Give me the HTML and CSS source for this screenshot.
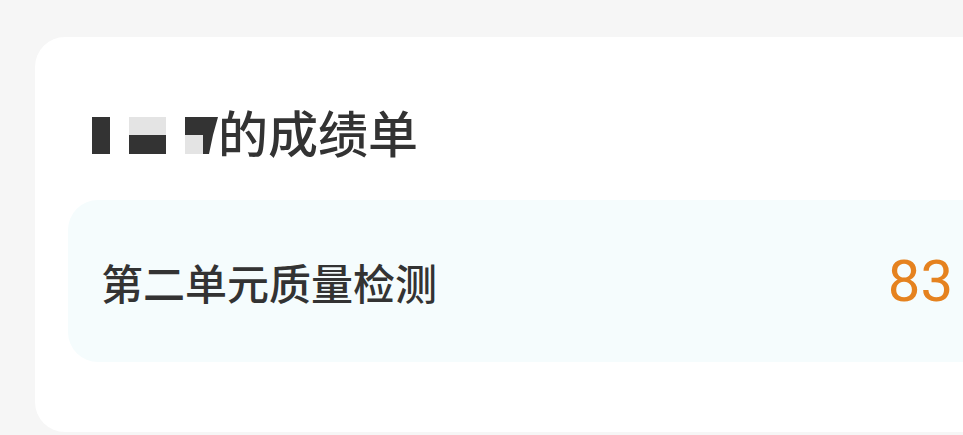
FILE: index.html
```html
<!DOCTYPE html>
<html lang="zh">
<head>
<meta charset="utf-8">
<link rel="stylesheet" href="styles.css">
</head>
<body>
<div class="card">
  <h1 class="title">
    <svg class="mask" width="126" height="37" viewBox="0 0 126 37" aria-hidden="true">
      <rect x="0" y="0" width="18" height="37" fill="#333"/>
      <rect x="37" y="0" width="37" height="18" fill="#e4e4e4"/>
      <rect x="37" y="18" width="37" height="19" fill="#333"/>
      <rect x="93" y="18" width="18" height="19" fill="#e4e4e4"/>
      <polygon points="93,0 126,0 121,18 117,37 111,37 111,18 93,18" fill="#333"/>
    </svg><span>的成绩单</span>
  </h1>
  <div class="row">
    <span class="name">第二单元质量检测</span>
    <span class="score">83</span>
  </div>
</div>
</body>
</html>
```
FILE: styles.css
```css
html, body {
  margin: 0;
  padding: 0;
  background: #f6f6f6;
  overflow: hidden;
  height: 435px;
}
body {
  font-family: "Noto Sans CJK SC", "Noto Sans", sans-serif;
  color: #333;
}
.card {
  margin: 37px -40px 0 35px;
  height: 395px;
  background: #ffffff;
  border-radius: 30px;
  padding: 66px 0 0 57px;
  box-sizing: border-box;
}
.title {
  margin: 0;
  font-size: 50px;
  font-weight: 500;
  line-height: 56px;
  height: 56px;
  display: flex;
  align-items: center;
  color: #333;
}
.mask {
  display: block;
  margin-top: 8px;
}
.row {
  margin: 41px 0 0 -24px;
  height: 162px;
  background: #f5fcfd;
  border-radius: 30px;
  display: flex;
  align-items: center;
  justify-content: space-between;
  padding: 0 50px 0 33px;
}
.name {
  font-size: 42px;
  font-weight: 500;
  color: #333;
}
.score {
  font-family: "Roboto", "Liberation Sans", sans-serif;
  font-size: 58px;
  color: #e5821f;
  font-weight: 400;
}
```
